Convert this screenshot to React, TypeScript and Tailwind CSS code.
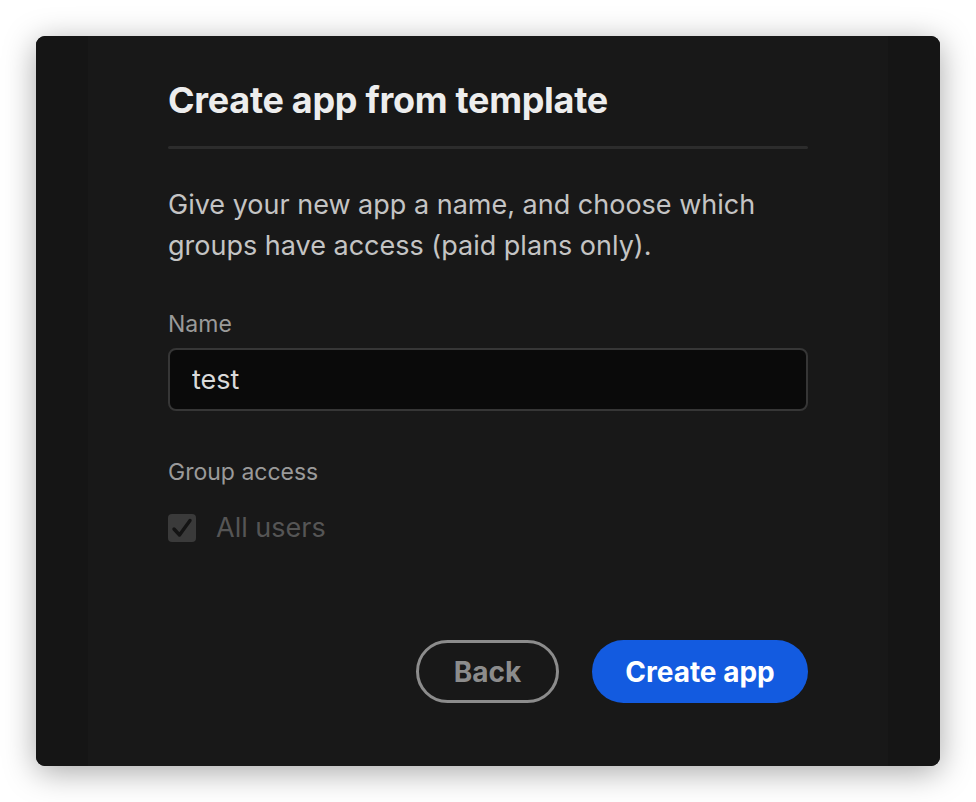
import { useState } from 'react';

// Modal shown after picking a template: name the app, pick groups.
export default function App() {
  const [name, setName] = useState('test');

  return (
    <div className="min-h-[802px] w-[976px] bg-white p-[36px] font-['Inter',sans-serif]">
      <div className="flex h-[730px] w-[904px] overflow-hidden rounded-[9px] bg-[#181818] shadow-[0_6px_32px_rgba(0,0,0,0.35)]">
        <div className="w-[52px] bg-[#151515]" />

        <div className="flex flex-1 flex-col px-[80px] pt-[44px]">
          <h1 className="text-[36px] font-bold leading-[40px] tracking-[-0.3px] text-[#ededed]">
            Create app from template
          </h1>
          <div className="mt-[26px] h-[3px] rounded-full bg-[#2c2c2c]" />

          <p className="mt-[35px] text-[27px] leading-[41px] text-[#c4c4c4]">
            Give your new app a name, and choose which groups have access (paid plans only).
          </p>

          <label className="mt-[44px] text-[23px] leading-[28px] text-[#9a9a9a]">Name</label>
          <input
            value={name}
            onChange={(e) => setName(e.target.value)}
            className="mt-[10px] h-[63px] rounded-[8px] border-2 border-[#363636] bg-[#0a0a0a] px-[22px] text-[27px] text-[#dadada] outline-none"
          />

          <div className="mt-[47px] text-[23px] leading-[28px] text-[#9a9a9a]">Group access</div>
          <div className="mt-[28px] flex items-center gap-[20px]">
            <span className="flex h-[28px] w-[28px] items-center justify-center rounded-[4px] bg-[#3a3a3a]">
              <svg width="24" height="24" viewBox="0 0 24 24" fill="none">
                <path d="M4 13 L9.5 19 L20 4.5" stroke="#141414" strokeWidth="3.4" strokeLinecap="round" strokeLinejoin="round" />
              </svg>
            </span>
            <span className="text-[27px] leading-[28px] text-[#555555]">All users</span>
          </div>

          <div className="mt-[98px] flex justify-end gap-[33px]">
            <button
              type="button"
              className="h-[63px] w-[143px] rounded-full border-[3px] border-[#8c8c8c] text-[28px] font-bold text-[#8c8c8c]"
            >
              Back
            </button>
            <button
              type="button"
              className="h-[63px] w-[216px] rounded-full bg-[#135be0] text-[28px] font-bold text-white"
            >
              Create app
            </button>
          </div>
        </div>

        <div className="w-[52px] bg-[#151515]" />
      </div>
    </div>
  );
}
